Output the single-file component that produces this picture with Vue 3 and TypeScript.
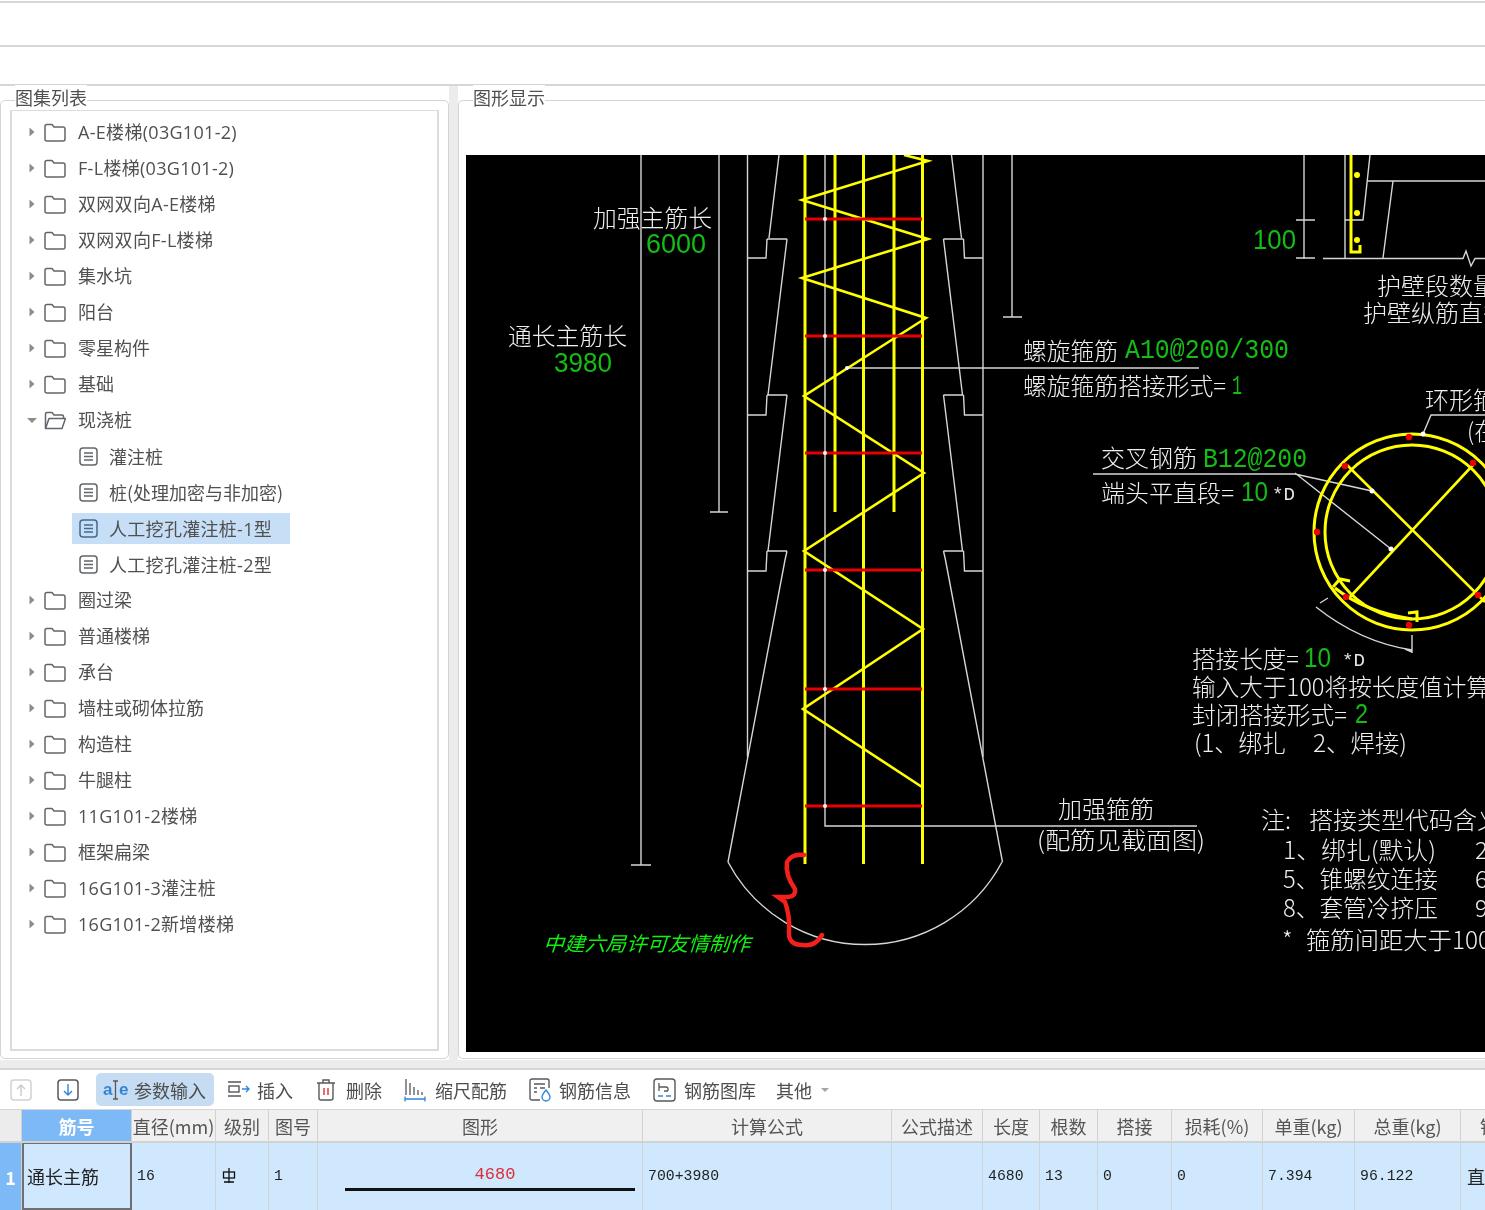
<script setup lang="ts">
interface TreeRow { label: string; kind: 'folder' | 'open' | 'leaf'; selected?: boolean }
interface CadText { t: string; x: number; y: number; len?: number; size: number; cls: string }

const rows: TreeRow[] = [
  { label: 'A-E楼梯(03G101-2)', kind: 'folder' },
  { label: 'F-L楼梯(03G101-2)', kind: 'folder' },
  { label: '双网双向A-E楼梯', kind: 'folder' },
  { label: '双网双向F-L楼梯', kind: 'folder' },
  { label: '集水坑', kind: 'folder' },
  { label: '阳台', kind: 'folder' },
  { label: '零星构件', kind: 'folder' },
  { label: '基础', kind: 'folder' },
  { label: '现浇桩', kind: 'open' },
  { label: '灌注桩', kind: 'leaf' },
  { label: '桩(处理加密与非加密)', kind: 'leaf' },
  { label: '人工挖孔灌注桩-1型', kind: 'leaf', selected: true },
  { label: '人工挖孔灌注桩-2型', kind: 'leaf' },
  { label: '圈过梁', kind: 'folder' },
  { label: '普通楼梯', kind: 'folder' },
  { label: '承台', kind: 'folder' },
  { label: '墙柱或砌体拉筋', kind: 'folder' },
  { label: '构造柱', kind: 'folder' },
  { label: '牛腿柱', kind: 'folder' },
  { label: '11G101-2楼梯', kind: 'folder' },
  { label: '框架扁梁', kind: 'folder' },
  { label: '16G101-3灌注桩', kind: 'folder' },
  { label: '16G101-2新增楼梯', kind: 'folder' }
]

const hasLatin = (s: string): boolean => /[0-9A-Z]/.test(s)

const headers = ['直径(mm)', '级别', '图号', '图形', '计算公式', '公式描述', '长度', '根数', '搭接', '损耗(%)', '单重(kg)', '总重(kg)', '钢']

const cadTexts: CadText[] = [
  { t: '加强主筋长', x: 593, y: 227, len: 119, size: 24, cls: 'w' },
  { t: '6000', x: 646, y: 253, len: 60, size: 27, cls: 'g' },
  { t: '通长主筋长', x: 508, y: 345, len: 119, size: 24, cls: 'w' },
  { t: '3980', x: 554, y: 372, len: 58, size: 27, cls: 'g' },
  { t: '100', x: 1253, y: 249, len: 43, size: 27, cls: 'g' },
  { t: '护壁段数量', x: 1377, y: 295, len: 120, size: 24, cls: 'w' },
  { t: '护壁纵筋直径', x: 1363, y: 322, len: 144, size: 24, cls: 'w' },
  { t: '螺旋箍筋', x: 1023, y: 360, len: 95, size: 24, cls: 'w' },
  { t: 'A10@200/300', x: 1125, y: 358, len: 164, size: 27, cls: 'gs' },
  { t: '螺旋箍筋搭接形式=', x: 1023, y: 395, len: 203, size: 24, cls: 'w' },
  { t: '1', x: 1232, y: 394, len: 10, size: 27, cls: 'gs' },
  { t: '环形箍筋', x: 1425, y: 409, len: 96, size: 24, cls: 'w' },
  { t: '(在', x: 1467, y: 440, len: 30, size: 24, cls: 'w' },
  { t: '交叉钢筋', x: 1101, y: 467, len: 96, size: 24, cls: 'w' },
  { t: 'B12@200', x: 1203, y: 467, len: 104, size: 27, cls: 'gs' },
  { t: '端头平直段=', x: 1101, y: 502, len: 133, size: 24, cls: 'w' },
  { t: '10', x: 1241, y: 501, len: 27, size: 27, cls: 'g' },
  { t: '*D', x: 1272, y: 500, len: 23, size: 18, cls: 'wl' },
  { t: '搭接长度=', x: 1192, y: 668, len: 107, size: 24, cls: 'w' },
  { t: '10', x: 1304, y: 667, len: 27, size: 27, cls: 'g' },
  { t: '*D', x: 1342, y: 666, len: 23, size: 18, cls: 'wl' },
  { t: '输入大于100将按长度值计算', x: 1192, y: 696, len: 298, size: 24, cls: 'w' },
  { t: '封闭搭接形式=', x: 1192, y: 724, len: 155, size: 24, cls: 'w' },
  { t: '2', x: 1355, y: 723, len: 13, size: 27, cls: 'g' },
  { t: '(1、绑扎', x: 1194, y: 752, len: 92, size: 24, cls: 'w' },
  { t: '2、焊接)', x: 1313, y: 752, len: 94, size: 24, cls: 'w' },
  { t: '注:', x: 1261, y: 829, size: 24, cls: 'w' },
  { t: '搭接类型代码含义', x: 1309, y: 829, len: 192, size: 24, cls: 'w' },
  { t: '1、绑扎(默认)', x: 1283, y: 859, len: 153, size: 24, cls: 'w' },
  { t: '2', x: 1475, y: 859, size: 24, cls: 'w' },
  { t: '5、锥螺纹连接', x: 1283, y: 888, len: 155, size: 24, cls: 'w' },
  { t: '6', x: 1475, y: 888, size: 24, cls: 'w' },
  { t: '8、套管冷挤压', x: 1283, y: 917, len: 155, size: 24, cls: 'w' },
  { t: '9', x: 1475, y: 917, size: 24, cls: 'w' },
  { t: '*', x: 1282, y: 949, size: 24, cls: 'w' },
  { t: '箍筋间距大于100', x: 1306, y: 949, len: 185, size: 24, cls: 'w' },
  { t: '加强箍筋', x: 1058, y: 818, len: 96, size: 24, cls: 'w' },
  { t: '(配筋见截面图)', x: 1037, y: 849, len: 168, size: 24, cls: 'w' }
]

const reds = [219, 336, 453, 570, 689, 806]
const circleDots = [[1409, 437], [1345, 466], [1473, 463], [1317, 532], [1346, 597], [1478, 595], [1409, 625]]
const mirror = 'translate(1730.5 0) scale(-1 1)'
</script>

<template>
  <div class="page">
    <div class="strip first"></div>
    <div class="strip second"></div>

    <div class="main">
      <section class="panel left">
        <div class="frame listframe">
          <span class="legend">图集列表</span>
          <ul class="tree">
            <li v-for="row in rows" :key="row.label" class="row">
              <template v-if="row.kind !== 'leaf'">
                <svg class="arrow" width="12" height="12" viewBox="0 0 12 12">
                  <path v-if="row.kind === 'folder'" d="M3.5 1.5 L8.5 6 L3.5 10.5 Z" fill="#8c8c8c" />
                  <path v-else d="M1 4 L11 4 L6 9 Z" fill="#8c8c8c" />
                </svg>
                <svg class="folder" width="22" height="19" viewBox="0 0 22 19" fill="none" stroke="#62666c" stroke-width="1.5" stroke-linejoin="round">
                  <path v-if="row.kind === 'folder'" d="M1 3.5 Q1 1.5 3 1.5 H8 L10 4 H19 Q21 4 21 6 V16 Q21 18 19 18 H3 Q1 18 1 16 Z" />
                  <template v-else>
                    <path d="M1.5 17 V3 Q1.5 1.5 3 1.5 H8 L10 4 H18 Q19.5 4 19.5 5.5 V7" />
                    <path d="M1.5 17.5 L5 7.5 H21.5 L18 17.5 Z" />
                  </template>
                </svg>
                <span class="label" :class="{ latin: hasLatin(row.label) }">{{ row.label }}</span>
              </template>
              <div v-else class="leaf" :class="{ selected: row.selected }">
                <svg width="19" height="19" viewBox="0 0 19 19" fill="none" :stroke="row.selected ? '#44698f' : '#62666c'" stroke-width="1.5">
                  <rect x="1" y="1" width="17" height="17" rx="3" />
                  <path d="M5 6 H14 M5 9.5 H14 M5 13 H14" />
                </svg>
                <span class="leaflabel" :class="{ latin: hasLatin(row.label) }">{{ row.label }}</span>
              </div>
            </li>
          </ul>
        </div>
      </section>

      <section class="panel right">
        <div class="frame viewframe">
          <span class="legend">图形显示</span>
          <svg class="cad" width="1019" height="897" viewBox="466 155 1019 897">
            <rect x="466" y="155" width="1019" height="897" fill="#000" />
            <g fill="none" stroke="#d6d6d6" stroke-width="1.4">
              <path d="M641 155 V865 M631 865 H651 M719 155 V512 M710 512 H728 M747.5 155 V757 M983 155 V757" />
              <path d="M825 155 V826 H1197 M1012 155 V317 M1003 317 H1022 M847 368 H1199" />
              <path d="M779 155 L769 238 M767 239 H787 M767 239 L766 258 H747.5 M787 239 L768 395 M767 395 H787 M767 395 L766 415 H747.5 M787 395 L768 551 M767 551 H787 M767 551 L766 571 H747.5 M787 551 L785 560 L728 862" />
              <g :transform="mirror">
                <path d="M779 155 L769 238 M767 239 H787 M767 239 L766 258 H747.5 M787 239 L768 395 M767 395 H787 M767 395 L766 415 H747.5 M787 395 L768 551 M767 551 H787 M767 551 L766 571 H747.5 M787 551 L785 560 L728 862" />
              </g>
              <path d="M728 862 A155 155 0 0 0 1002 862" />
              <path d="M1304 155 V259 M1296 220 H1315 M1296 258 H1315 M1323 258.5 H1463 L1466 251 L1471 266 L1475 258.5 H1485" />
              <path d="M1345 155 V258 M1370 155 L1363 220 H1345 M1367 181 H1485 M1393 181 L1383 258" />
              <path d="M1093 474 H1295 L1372 491 M1295 473 L1391 549 M1423 434 L1431 415 H1485" />
              <path d="M1320 603 L1328 598 M1316 607 Q1360 642 1412 650 M1412 635 V653 M1405 649 L1412 652" />
            </g>

            <g fill="none" stroke="#ffff00">
              <path stroke-width="3" d="M805 155 V864 M835 155 V512 M863.5 155 V864 M894 155 V512 M922.5 155 V864" />
              <path stroke-width="2.6" d="M904 155 L928 161 L802 200 L928 239 L802 278 L926 318 L804 396 L924 473 L804 551 L923 629 L803 709 L922 787" />
              <path stroke-width="3" d="M1351 155 V252 H1360 V245" />
              <circle cx="1412" cy="532" r="98" stroke-width="3" />
              <circle cx="1412" cy="532" r="87" stroke-width="3" />
              <path stroke-width="2.6" d="M1347 465 L1485 602 M1473 465 L1350 597" />
              <path stroke-width="3" d="M1333 587 L1340 579 L1350 581 M1408 613 L1417 612 L1417 622 M1335 588 Q1365 612 1412 619" />
            </g>

            <g fill="#ffff00">
              <circle cx="1357" cy="175" r="3" />
              <circle cx="1357" cy="213" r="3" />
              <circle cx="1357" cy="240" r="3" />
            </g>

            <path
              v-for="y in reds"
              :key="y"
              :d="`M805 ${y} H922`"
              stroke="#e60000"
              stroke-width="3"
              fill="none"
            />
            <circle v-for="y in reds" :key="`d${y}`" cx="825" :cy="y" r="2" fill="#fff" />
            <circle cx="847" cy="368" r="2" fill="#fff" />
            <circle cx="1372" cy="491" r="2.5" fill="#fff" />
            <circle cx="1391" cy="549" r="2.5" fill="#fff" />
            <circle cx="1423" cy="434" r="2.5" fill="#fff" />
            <circle v-for="d in circleDots" :key="`c${d[0]}${d[1]}`" :cx="d[0]" :cy="d[1]" r="3.2" fill="#f00000" />

            <path
              d="M804 855 Q792 853 787 862 Q785 875 795 889 Q796 897 787 897 L778 897 L785 902 Q790 915 789 932 Q788 945 803 945 Q815 947 822 935"
              fill="none"
              stroke="#f4201c"
              stroke-width="4.5"
              stroke-linecap="round"
            />

            <text
              v-for="c in cadTexts"
              :key="c.t + c.x"
              :x="c.x"
              :y="c.y"
              :font-size="c.size"
              :textLength="c.len"
              :lengthAdjust="c.len ? 'spacingAndGlyphs' : undefined"
              :class="c.cls"
            >{{ c.t }}</text>
            <text x="0" y="0" font-size="20" textLength="207" lengthAdjust="spacingAndGlyphs" class="credit" transform="translate(543 951) skewX(-18)">中建六局许可友情制作</text>
          </svg>
        </div>
      </section>
    </div>

    <div class="band"></div>

    <div class="toolbar">
      <button class="tool t-up">
        <svg width="22" height="22" viewBox="0 0 22 22" fill="none">
          <rect x="1" y="1" width="20" height="20" rx="3" stroke="#d2d2d2" stroke-width="1.5" />
          <path d="M11 17 V6 M7 10 L11 6 L15 10" stroke="#c8c8c8" stroke-width="1.3" />
        </svg>
      </button>
      <button class="tool t-down">
        <svg width="22" height="22" viewBox="0 0 22 22" fill="none">
          <rect x="1" y="1" width="20" height="20" rx="3" stroke="#55595e" stroke-width="1.5" />
          <path d="M11 5 V16 M7 12 L11 16 L15 12" stroke="#2f86d8" stroke-width="1.4" />
        </svg>
      </button>
      <button class="tool t-param active">
        <svg width="26" height="24" viewBox="0 0 26 24" fill="none">
          <text x="0" y="17" class="ic-letter">a</text>
          <text x="16" y="17" class="ic-letter">e</text>
          <path d="M10 3 H15 M12.5 3 V21 M10 21 H15" stroke="#55595e" stroke-width="1.3" />
        </svg>
        <span>参数输入</span>
      </button>
      <button class="tool t-insert">
        <svg width="24" height="20" viewBox="0 0 24 20" fill="none">
          <path d="M1 2 H14 M1 16 H14" stroke="#55595e" stroke-width="1.4" />
          <rect x="2" y="6" width="10" height="6" stroke="#55595e" stroke-width="1.4" />
          <path d="M15 9 H22 M19 6 L22 9 L19 12" stroke="#2f86d8" stroke-width="1.4" />
        </svg>
        <span>插入</span>
      </button>
      <button class="tool t-delete">
        <svg width="20" height="24" viewBox="0 0 20 24" fill="none">
          <path d="M1 5 H19 M7 5 V2 H13 V5" stroke="#55595e" stroke-width="1.4" />
          <path d="M3 5 V20 Q3 22 5 22 H15 Q17 22 17 20 V5" stroke="#55595e" stroke-width="1.4" />
          <path d="M8 10 V17 M12 10 V17" stroke="#d8413a" stroke-width="1.5" />
        </svg>
        <span>删除</span>
      </button>
      <button class="tool t-scale">
        <svg width="22" height="24" viewBox="0 0 22 24" fill="none">
          <path d="M2 1 V17 M6 5 V17 M10 9 V17 M14 12 V17 M18 14 V17" stroke="#55595e" stroke-width="1.3" />
          <path d="M1 21 H21 M1 18.5 V23.5 M21 18.5 V23.5" stroke="#2f86d8" stroke-width="1.3" />
        </svg>
        <span>缩尺配筋</span>
      </button>
      <button class="tool t-info">
        <svg width="24" height="24" viewBox="0 0 24 24" fill="none">
          <path d="M11 22 H3 Q1 22 1 20 V3 Q1 1 3 1 H18 Q20 1 20 3 V10" stroke="#55595e" stroke-width="1.4" />
          <path d="M5 6 H16 M5 10 H8 M11 10 H16 M5 14 H8" stroke="#55595e" stroke-width="1.3" />
          <path d="M17 12 Q13 17 13 19 A4 4 0 0 0 21 19 Q21 17 17 12 Z" stroke="#2f86d8" stroke-width="1.4" />
        </svg>
        <span>钢筋信息</span>
      </button>
      <button class="tool t-lib">
        <svg width="23" height="24" viewBox="0 0 23 24" fill="none">
          <rect x="1" y="1" width="21" height="22" rx="3" stroke="#55595e" stroke-width="1.4" />
          <path d="M6 5 V13 M6 9 H13 Q15 9 15 11 V13 M11 13 H15" stroke="#55595e" stroke-width="1.3" />
          <path d="M5 18 H10 M13 18 H18" stroke="#2f86d8" stroke-width="1.4" />
        </svg>
        <span>钢筋图库</span>
      </button>
      <button class="tool t-more">
        <span>其他</span>
        <svg width="8" height="6" viewBox="0 0 8 6"><path d="M0 1 H8 L4 5 Z" fill="#a5a5a5" /></svg>
      </button>
    </div>

    <div class="grid head">
      <div class="cell corner"></div>
      <div class="cell hot">筋号</div>
      <div v-for="h in headers" :key="h" class="cell th">{{ h }}</div>
    </div>
    <div class="grid body">
      <div class="cell index">1</div>
      <div class="cell name">通长主筋</div>
      <div class="cell td">16</div>
      <div class="cell td grade">
        <svg width="14" height="16" viewBox="0 0 14 16" fill="none" stroke="#111" stroke-width="1.3">
          <rect x="1.5" y="4" width="11" height="6" />
          <path d="M7 0 V15 M2 14 H12" />
        </svg>
      </div>
      <div class="cell td">1</div>
      <div class="cell shape">
        <span class="len">4680</span>
        <span class="bar"></span>
      </div>
      <div class="cell td">700+3980</div>
      <div class="cell td"></div>
      <div class="cell td">4680</div>
      <div class="cell td">13</div>
      <div class="cell td">0</div>
      <div class="cell td">0</div>
      <div class="cell td">7.394</div>
      <div class="cell td">96.122</div>
      <div class="cell td cn">直</div>
    </div>
  </div>
</template>

<style>
html, body {
  margin: 0;
  background: #fff;
  overflow: hidden;
}
</style>

<style scoped>
.page {
  width: 1485px;
  height: 1210px;
  overflow: hidden;
  background: #fff;
  color: #505050;
  font-family: "Noto Sans CJK SC", "Liberation Sans", sans-serif;
  font-size: 18px;
  filter: blur(0.35px);
}
.strip { border-top: 2px solid #d6d6d8; }
.first { margin-top: 1px; height: 42px; }
.second { height: 37px; }
.main {
  display: flex;
  height: 974px;
  border-top: 2px solid #d6d6d8;
  background: #ececec;
}
.panel { background: #fff; height: 974px; }
.left { width: 449px; margin-right: 9px; flex: none; }
.right { flex: 1; min-width: 0; }
.frame {
  position: relative;
  box-sizing: border-box;
  margin-top: 14px;
  height: 959px;
  border: 1px solid #d4d4d4;
  border-radius: 5px;
}
.listframe { padding: 9px 9px 7px 9px; }
.viewframe { padding: 54px 0 0 7px; border-right: none; border-radius: 5px 0 0 5px; }
.legend {
  position: absolute;
  top: -16px;
  left: 14px;
  background: #fff;
  line-height: 24px;
  white-space: nowrap;
}
.tree {
  list-style: none;
  margin: 0;
  box-sizing: border-box;
  height: 941px;
  padding: 3px 0 0;
  border: 2px solid #dcdcdc;
  border-width: 1px 2px 2px 2px;
}
.row {
  display: flex;
  align-items: center;
  height: 36px;
}
.arrow { margin-left: 14px; flex: none; }
.folder { margin-left: 6px; flex: none; }
.label { margin-left: 12px; padding-bottom: 2px; white-space: nowrap; }
.latin { font-family: "Open Sans", "Noto Sans CJK SC", sans-serif; letter-spacing: 0.3px; }
.leaf {
  display: flex;
  align-items: center;
  box-sizing: border-box;
  height: 31px;
  margin-left: 60px;
  padding: 0 18px 0 7px;
}
.leaf.selected { background: #c6dff6; }
.leaflabel { margin-left: 11px; padding-bottom: 1px; white-space: nowrap; }
.cad { display: block; }
.cad text { font-family: "Noto Sans CJK SC", "Liberation Sans", sans-serif; font-weight: 300; }
.cad text.w { fill: #efefef; }
.cad text.wl { fill: #e4e4e4; font-family: "Liberation Mono", monospace; }
.cad text.g { fill: #14bd14; font-family: "Liberation Sans", sans-serif; font-weight: 400; }
.cad text.gs { fill: #14bd14; font-family: "Liberation Mono", monospace; font-weight: 400; }
.cad text.credit { fill: #10f010; font-weight: 400; }
.band { height: 8px; background: #ececec; }
.toolbar {
  display: flex;
  align-items: center;
  box-sizing: content-box;
  height: 39px;
  border-top: 2px solid #d6d6d8;
  padding-left: 10px;
}
.tool {
  display: flex;
  align-items: center;
  flex: none;
  padding: 0;
  border: none;
  background: none;
  color: #4e4e4e;
  font: inherit;
  line-height: 1;
}
.t-down { margin-left: 25px; }
.t-param { margin-left: 17px; width: 118px; height: 33px; padding-left: 7px; box-sizing: border-box; }
.t-param span { margin-left: 5px; }
.active { background: #c6dcf2; border-radius: 5px; }
.t-insert { margin-left: 13px; }
.t-insert span { margin-left: 6px; }
.t-delete { margin-left: 23px; }
.t-delete span { margin-left: 10px; }
.t-scale { margin-left: 22px; }
.t-scale span { margin-left: 9px; }
.t-info { margin-left: 22px; }
.t-info span { margin-left: 6px; }
.t-lib { margin-left: 22px; }
.t-lib span { margin-left: 8px; }
.t-more { margin-left: 20px; }
.t-more svg { margin-left: 9px; }
.ic-letter { font-family: "Liberation Sans", sans-serif; font-size: 17px; font-weight: 700; fill: #2f86d8; }
.grid {
  display: grid;
  grid-template-columns: 22px 110px 84px 53px 49px 325px 249px 91px 57px 58px 74px 91px 92px 106px 40px;
}
.head {
  height: 34px;
  box-sizing: border-box;
  border-top: 1px solid #d6d6d8;
  border-bottom: 2px solid #d2d2d2;
  background: #f0f0f0;
}
.body { height: 67px; background: #cfe8fd; }
.cell {
  box-sizing: border-box;
  display: flex;
  align-items: center;
  border-right: 1px solid #d2d2d2;
  white-space: nowrap;
  overflow: hidden;
}
.corner { background: #ececec; }
.hot { background: #7cb9f6; color: #fff; justify-content: center; font-weight: 700; }
.th { justify-content: center; color: #555; }
.th:last-child { justify-content: flex-start; padding-left: 19px; }
.index { background: #7cb9f6; color: #fff; justify-content: center; font-weight: 700; }
.name {
  border: 2px solid #6f6f6f;
  border-top-width: 1px;
  padding-left: 3px;
  color: #222;
}
.td {
  padding-left: 5px;
  padding-bottom: 2px;
  font-family: "Liberation Mono", monospace;
  font-size: 14.8px;
  color: #222;
}
.td.cn { font-family: "Noto Sans CJK SC", sans-serif; font-size: 18px; padding-left: 6px; color: #222; }
.grade { padding-left: 6px; }
.shape {
  position: relative;
  justify-content: center;
}
.len {
  position: relative;
  top: -2px;
  left: 15px;
  font-family: "Liberation Mono", monospace;
  font-size: 17px;
  color: #dc2d36;
}
.bar {
  position: absolute;
  left: 27px;
  top: 45px;
  width: 290px;
  height: 3px;
  background: #111;
}
</style>
